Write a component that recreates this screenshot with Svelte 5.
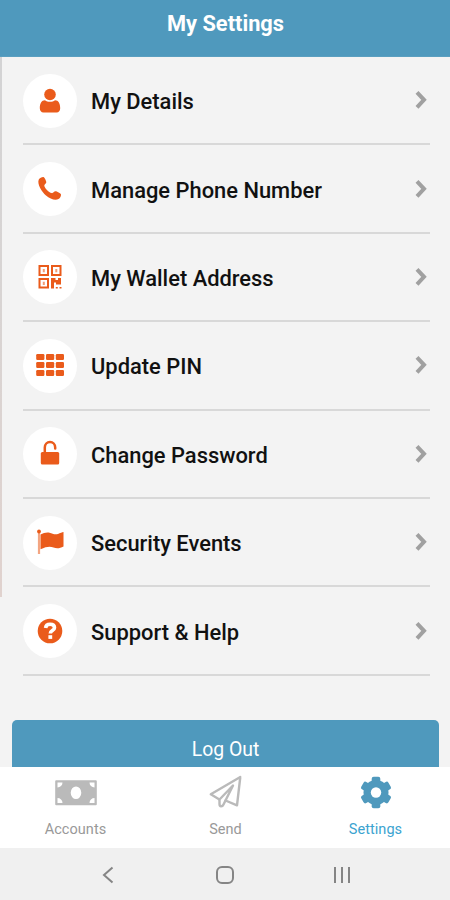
<script lang="ts">
  const items = [
    { icon: "user", label: "My Details" },
    { icon: "phone", label: "Manage Phone Number" },
    { icon: "qr", label: "My Wallet Address" },
    { icon: "grid", label: "Update PIN" },
    { icon: "lock", label: "Change Password" },
    { icon: "flag", label: "Security Events" },
    { icon: "help", label: "Support & Help" }
  ];

  const tabs = ["Accounts", "Send", "Settings"];
  let active = "Settings";
</script>

<div class="screen">
  <header>
    <h1>My Settings</h1>
  </header>

  <main>
    <div class="edge"></div>
    <ul>
      {#each items as item (item.icon)}
        <li>
          <span class="circle">
            <svg viewBox="0 0 54 54" width="54" height="54">
              {#if item.icon === "user"}
                <circle cx="27" cy="20.500" r="5.800" />
                <path d="M22 26.200c1.300 1 3 1.500 5 1.500s3.700-.5 5-1.500c3.500 0 5.200 3.500 5.200 8 0 2.600-1.500 4.300-3.500 4.300h-13.400c-2 0-3.500-1.700-3.500-4.300 0-4.500 1.700-8 5.200-8z" />
              {:else if item.icon === "phone"}
                <path d="M15.800 17.500c.8-1.700 3.200-2.600 4.600-2.500 1.200.3 2.900 4.200 2.900 5.300 0 1.400-2.400 2.300-2 3.600 1 3 4.300 6 7.300 7.200 1.300.5 2.400-1.800 3.800-1.800 1.300 0 5.500 2 5.600 3.200.1 1.500-.8 3.800-2.500 4.600-3.400 1.600-8.500-.1-12.500-3.600-4.300-3.800-9.200-11.500-7.200-16z" />
              {:else if item.icon === "qr"}
                <path fill-rule="evenodd" d="M15.500 15h10.500v11h-10.500zM17.500 17v7h6.500v-7zM28 15h10.500v11h-10.500zM30 17v7h6.500v-7zM15.500 28h10.500v10.500h-10.500zM17.500 30v6.500h6.500v-6.500zM28 28h4.500v2h2.500v-2h3v6.500h-5v-2h-2v6h-3zM32.800 37h2v1.500h-2zM36.500 37h2v1.500h-2z" />
                <path d="M19.800 19h2v3.200h-2zM32.300 19h2v3.200h-2zM19.800 31.700h2v3.200h-2z" opacity=".6" />
              {:else if item.icon === "grid"}
                {#each [15, 23, 31] as y}
                  {#each [13.200, 23, 32.800] as x}
                    <rect {x} {y} width="8.200" height="6" rx="1.200" />
                  {/each}
                {/each}
              {:else if item.icon === "lock"}
                <path d="M21.800 26v-5.500a5.200 5.500 0 0 1 10.400 0v1" fill="none" stroke="currentColor" stroke-width="2.500" stroke-linecap="round" />
                <rect x="17.800" y="25" width="18.400" height="12.500" rx="1.500" />
              {:else if item.icon === "flag"}
                <circle cx="16" cy="15.500" r="1.900" />
                <path d="M14.900 16.500h2.200v21.500h-2.200z" opacity=".55" />
                <path d="M17.500 18.500c3-1.500 6-2.400 9-1.800 3 .6 5 2.300 8.500 1.200 2.200-.7 4.500-2 5.500-1.900v14.500c-3.500 1.800-6.500 2.500-10 1-3.500-1.400-7-1-13 1.700z" />
              {:else}
                <circle cx="27" cy="27" r="12.300" />
                <path d="M22.600 24c.2-2.600 1.900-3.800 4.500-3.800 2.700 0 4.400 1.300 4.400 3.500 0 3-4.200 2.800-4.200 5.800" fill="none" stroke="#fff" stroke-width="3.600" />
                <rect x="25.400" y="31.200" width="3.800" height="3.700" fill="#fff" />
              {/if}
            </svg>
          </span>
          <span class="label">{item.label}</span>
          <svg class="chevron" viewBox="0 0 14 20" width="14" height="20">
            <path d="M3 2.300 10 9.800 3 17.300" />
          </svg>
        </li>
      {/each}
    </ul>
    <button class="logout">Log Out</button>
  </main>

  <nav class="tabs">
    {#each tabs as tab}
      <button class:active={tab === active} on:click={() => (active = tab)}>
        {#if tab === "Accounts"}
          <svg viewBox="0 0 44 36" width="44" height="36">
            <path fill="currentColor" fill-rule="evenodd" d="M2.200 6.300h39.600a1 1 0 0 1 1 1v23a1 1 0 0 1-1 1h-39.600a1 1 0 0 1-1-1v-23a1 1 0 0 1 1-1zM22 12.500a5.300 6.300 0 1 0 0 12.600a5.300 6.300 0 1 0 0-12.600z" />
            <path fill="#fff" d="M3.500 8.500h5a5 5 0 0 1-5 5zM40.500 8.500h-5a5 5 0 0 0 5 5zM3.500 29h5a5 5 0 0 0-5-5zM40.500 29h-5a5 5 0 0 1 5-5z" />
          </svg>
        {:else if tab === "Send"}
          <svg viewBox="0 0 44 36" width="44" height="36">
            <g fill="none" stroke="currentColor" stroke-width="2.400" stroke-linejoin="round" stroke-linecap="round">
              <path d="M36.300 3 6.800 20.300 15 25.200M36.300 3 33 31.300 21.500 26.500" />
              <path d="M29 11.500 15.500 25.500v4.500c0 3 2.800 3 4 .5l2-4z" />
            </g>
          </svg>
        {:else}
          <svg viewBox="0 0 44 36" width="44" height="36">
            <g fill="#4f99bd">
              {#each [0, 60, 120] as angle}
                <rect x="17.700" y="2.800" width="8.600" height="31.400" rx="2" transform="rotate({angle} 22 18.500)" />
              {/each}
              <circle cx="22" cy="18.500" r="12.500" />
            </g>
            <circle cx="22" cy="18.500" r="5.200" fill="#fff" />
          </svg>
        {/if}
        <span>{tab}</span>
      </button>
    {/each}
  </nav>

  <div class="system">
    <svg viewBox="0 0 24 24" width="24" height="24">
      <path d="M16.500 4.500 8 12l8.500 7.500" />
    </svg>
    <svg viewBox="0 0 24 24" width="24" height="24">
      <rect x="4" y="4" width="16" height="16" rx="5" />
    </svg>
    <svg viewBox="0 0 24 24" width="24" height="24">
      <path d="M5 4v16M12 4v16M19 4v16" />
    </svg>
  </div>
</div>

<style>
  :global(body) {
    margin: 0;
  }

  .screen {
    width: 450px;
    height: 900px;
    display: flex;
    flex-direction: column;
    overflow: hidden;
    background: #f3f3f3;
    font-family: Roboto, sans-serif;
  }

  header {
    height: 57px;
    flex: none;
    box-sizing: border-box;
    padding-top: 10px;
    background: #4f99bd;
    border-bottom: 1px solid #5a9fc0;
  }

  h1 {
    margin: 0;
    padding-left: 1px;
    color: #fff;
    font-size: 21.8px;
    line-height: 28px;
    font-weight: 700;
    text-align: center;
  }

  main {
    position: relative;
    height: 710px;
    flex: none;
    overflow: hidden;
  }

  .edge {
    position: absolute;
    top: 0;
    left: 0;
    width: 2px;
    height: 540px;
    background: linear-gradient(#d3d3d4, #d8d4d3 45%, #e0d2ce);
  }

  ul {
    margin: 0;
    padding: 0 20px 0 23px;
    list-style: none;
  }

  li {
    height: 88.4px;
    box-sizing: border-box;
    display: flex;
    align-items: center;
    border-bottom: 2px solid #d8d8d8;
  }

  .circle {
    width: 54px;
    height: 54px;
    flex: none;
    margin-top: 1px;
    border-radius: 50%;
    background: #fff;
  }

  .circle svg {
    display: block;
    color: #ea5b1b;
    fill: #ea5b1b;
  }

  .label {
    flex: 1;
    margin-left: 14px;
    padding-top: 4px;
    font-size: 21.9px;
    line-height: 28px;
    font-weight: 500;
    color: #111;
    white-space: nowrap;
  }

  .chevron {
    margin-right: 2px;
  }

  .chevron path {
    fill: none;
    stroke: #a0a0a0;
    stroke-width: 4;
  }

  .logout {
    display: block;
    width: 427px;
    height: 60px;
    margin: 44px 0 0 12px;
    padding: 0;
    border: none;
    border-radius: 5px;
    background: #4f99bd;
    color: #fff;
    font-family: inherit;
    font-size: 19.4px;
  }

  .tabs {
    height: 81px;
    flex: none;
    display: grid;
    grid-template-columns: repeat(3, 150px);
    background: #fff;
  }

  .tabs button {
    display: flex;
    flex-direction: column;
    align-items: center;
    padding: 7px 0 0 1px;
    border: none;
    background: none;
    color: #bababa;
    font-family: inherit;
  }

  .tabs span {
    margin-top: 9px;
    padding-top: 1px;
    font-size: 14.5px;
    line-height: 20px;
    letter-spacing: 0.05px;
    color: #999;
  }

  .tabs .active span {
    color: #3ba3d0;
  }

  .system {
    flex: 1;
    display: flex;
    align-items: center;
    justify-content: center;
    gap: 93px;
    padding-top: 2px;
    background: #f0f0f0;
  }

  .system svg {
    fill: none;
    stroke: #858585;
    stroke-width: 2;
  }
</style>
